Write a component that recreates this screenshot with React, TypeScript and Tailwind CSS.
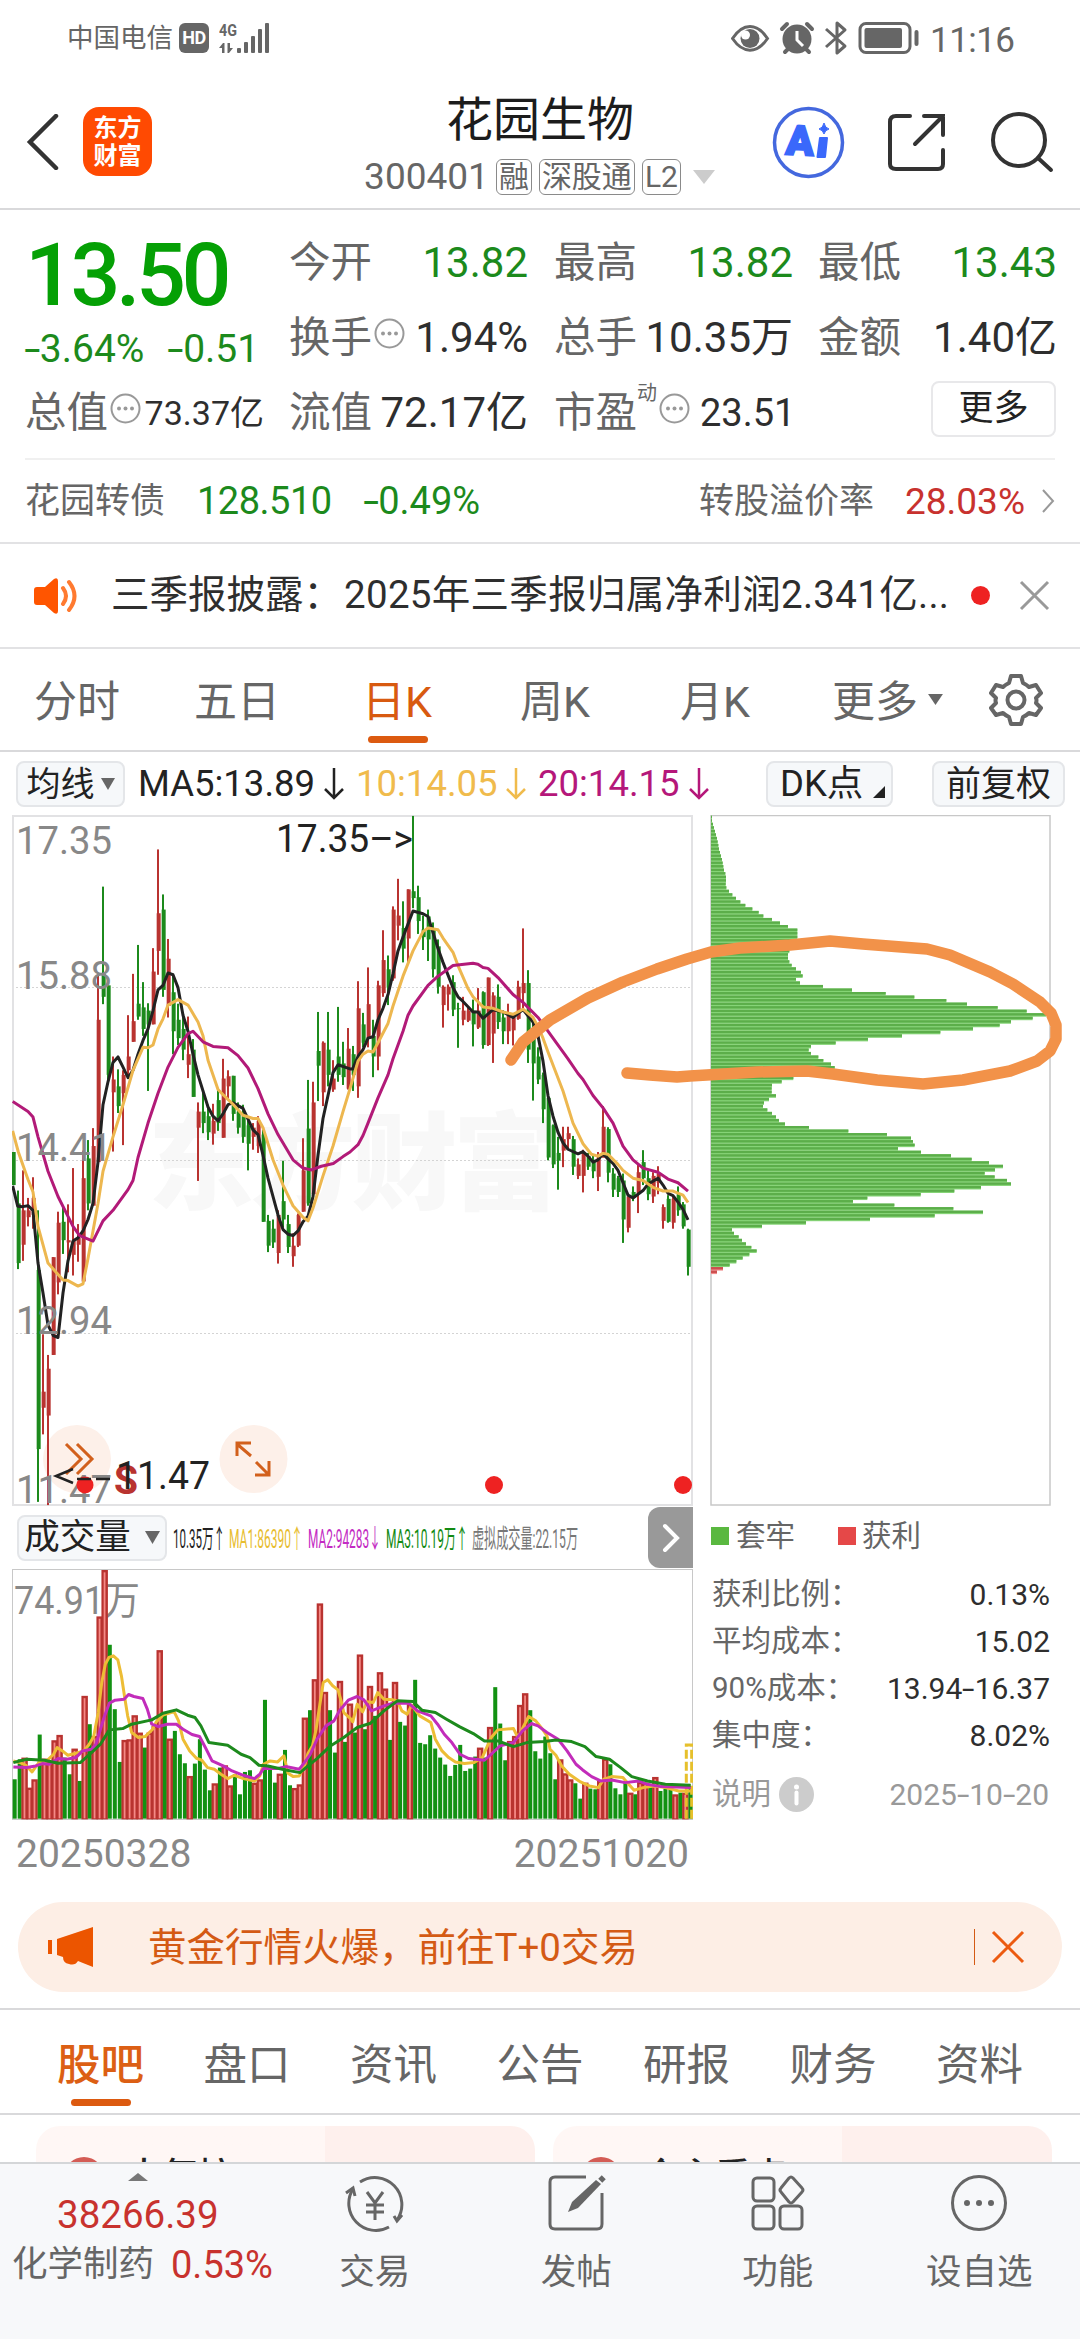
import React from "react";
import { clsx } from "clsx";

type Candle = [
  color: "r" | "g",
  high: number,
  bodyTop: number,
  bodyBottom: number,
  low: number
];

type Bar = ["r" | "g", number];

const RED = "#b93330";
const GREEN = "#1c8a1c";

// One candle every 15 plot units, y grows downwards
const candles: Candle[] = [
  ["g", 768, 768, 840, 840], ["g", 852, 880, 1010, 1023], ["r", 808, 895, 970, 1005],
  ["r", 868, 895, 910, 930], ["r", 823, 868, 905, 935], ["g", 895, 1025, 1415, 1530],
  ["r", 1165, 1290, 1325, 1383], ["r", 1210, 1240, 1342, 1537], ["r", 997, 997, 1210, 1210],
  ["r", 898, 922, 1052, 1078], ["g", 885, 920, 960, 990], ["r", 882, 960, 965, 1030],
  ["r", 803, 962, 992, 1037], ["r", 925, 955, 970, 1007], ["r", 765, 825, 1050, 1055],
  ["g", 742, 782, 880, 895], ["r", 716, 755, 885, 885], ["r", 380, 480, 790, 790],
  ["g", 190, 380, 430, 446], ["g", 405, 405, 600, 615], ["r", 560, 610, 638, 767],
  ["g", 588, 625, 668, 683], ["r", 590, 600, 640, 753], ["r", 470, 560, 590, 605],
  ["r", 380, 483, 528, 528], ["g", 317, 445, 473, 480], ["g", 398, 453, 500, 515],
  ["g", 444, 460, 490, 635], ["r", 324, 375, 490, 490], ["r", 109, 248, 330, 382],
  ["g", 207, 240, 415, 430], ["r", 304, 347, 450, 475], ["g", 380, 420, 505, 555],
  ["g", 445, 480, 520, 535], ["g", 470, 500, 545, 568], ["r", 473, 555, 578, 607],
  ["g", 522, 545, 648, 648], ["r", 660, 680, 715, 831], ["g", 635, 680, 705, 727],
  ["g", 665, 690, 725, 742], ["r", 663, 700, 728, 752], ["g", 630, 655, 705, 722],
  ["r", 565, 608, 737, 737], ["r", 590, 603, 625, 655], ["g", 602, 602, 685, 700],
  ["g", 660, 680, 715, 728], ["g", 665, 690, 735, 748], ["g", 700, 710, 750, 808],
  ["r", 705, 715, 735, 763], ["r", 690, 700, 755, 770], ["g", 720, 730, 920, 920],
  ["g", 905, 918, 972, 986], ["g", 915, 935, 965, 977], ["r", 895, 905, 988, 1011],
  ["g", 787, 875, 915, 932], ["g", 905, 925, 975, 988], ["r", 945, 972, 995, 1018],
  ["r", 902, 905, 972, 975], ["r", 738, 808, 898, 898], ["g", 611, 717, 880, 885],
  ["r", 615, 660, 860, 870], ["g", 463, 548, 580, 657], ["r", 527, 530, 638, 668],
  ["g", 463, 545, 600, 625], ["r", 568, 608, 632, 637], ["g", 452, 560, 600, 615],
  ["g", 528, 575, 605, 622], ["r", 498, 543, 630, 632], ["g", 537, 555, 600, 635],
  ["r", 396, 455, 625, 650], ["g", 465, 490, 530, 540], ["r", 366, 446, 520, 540],
  ["g", 480, 515, 560, 605], ["r", 395, 405, 560, 590], ["r", 285, 350, 422, 430],
  ["g", 340, 370, 410, 448], ["r", 233, 240, 390, 395], ["r", 173, 253, 275, 307],
  ["g", 222, 280, 325, 355], ["r", 196, 196, 303, 360], ["g", 36, 200, 215, 237],
  ["g", 188, 213, 265, 293], ["g", 253, 283, 300, 328], ["g", 240, 255, 305, 352],
  ["g", 268, 283, 370, 388], ["g", 305, 320, 408, 423], ["r", 405, 408, 448, 497],
  ["r", 403, 408, 425, 460], ["g", 383, 398, 458, 472], ["g", 443, 455, 457, 541],
  ["r", 430, 460, 480, 492], ["r", 450, 460, 482, 485], ["g", 436, 460, 490, 538],
  ["r", 411, 460, 497, 500], ["g", 418, 420, 535, 543], ["r", 388, 388, 535, 537],
  ["r", 420, 427, 510, 574], ["g", 403, 430, 485, 500], ["g", 460, 475, 505, 533],
  ["r", 445, 470, 505, 533], ["r", 470, 475, 503, 536], ["r", 395, 408, 478, 480],
  ["r", 281, 400, 422, 455], ["g", 372, 400, 545, 574], ["g", 480, 505, 575, 656],
  ["g", 540, 560, 610, 620], ["g", 595, 600, 675, 705], ["g", 645, 650, 780, 786],
  ["g", 708, 710, 795, 803], ["g", 735, 770, 787, 850], ["r", 713, 740, 765, 801],
  ["r", 713, 727, 740, 760], ["g", 733, 740, 800, 818], ["r", 782, 795, 820, 827],
  ["r", 763, 770, 820, 856], ["g", 770, 777, 800, 807], ["g", 775, 785, 810, 825],
  ["r", 768, 780, 822, 853], ["r", 668, 713, 780, 780], ["g", 714, 718, 813, 834],
  ["g", 803, 815, 850, 866], ["g", 820, 825, 855, 866], ["g", 815, 830, 915, 966],
  ["r", 865, 865, 933, 943], ["g", 843, 855, 868, 875], ["r", 793, 812, 858, 901],
  ["g", 764, 790, 825, 840], ["g", 808, 825, 860, 873], ["r", 812, 820, 865, 879],
  ["r", 799, 815, 835, 860], ["r", 882, 888, 918, 935], ["g", 862, 870, 920, 922],
  ["r", 862, 870, 922, 935], ["g", 843, 860, 895, 907], ["g", 877, 882, 930, 935],
  ["g", 935, 937, 1018, 1037],
];

const ma5 =
  "38,842 53,886 68,887 84,885 99,895 114,1010 129,1075 144,1145 160,1168 174,1172 189,1075 204,1005 219,962 234,955 249,940 264,915 279,880 294,790 309,665 324,615 339,573 354,561 369,583 384,606 399,590 414,555 429,525 444,500 459,460 474,415 489,405 504,378 519,382 534,410 549,470 564,505 579,555 594,600 624,670 639,690 654,700 669,685 684,665 699,661 729,673 759,720 774,730 789,775 804,825 834,905 849,937 864,947 879,950 894,940 909,920 924,908 939,865 954,775 969,695 999,595 1014,578 1050,587 1058,587 1074,560 1089,545 1104,520 1119,517 1134,480 1149,455 1164,425 1179,380 1194,330 1209,300 1239,243 1269,249 1284,255 1299,290 1314,325 1329,355 1359,410 1374,430 1389,440 1419,463 1434,463 1449,477 1479,458 1509,463 1539,475 1569,458 1599,485 1614,515 1629,570 1644,645 1659,690 1674,725 1689,748 1704,762 1734,772 1749,767 1764,777 1779,790 1794,785 1809,772 1824,783 1839,793 1854,808 1869,835 1884,862 1899,868 1929,852 1944,838 1974,825 1989,840 2004,858 2019,863 2034,877 2049,893 2064,916";
const ma10 =
  "38,722 55,768 84,828 99,855 114,930 144,1010 189,1047 204,1048 234,1060 249,1055 264,1000 294,880 309,810 339,735 369,665 399,590 429,540 444,541 459,535 474,500 489,478 504,448 534,436 564,448 594,485 609,515 624,568 654,632 669,643 699,664 729,688 759,695 774,695 789,715 819,785 849,840 879,885 909,910 924,918 939,890 969,820 999,755 1029,680 1050,630 1074,570 1089,555 1104,548 1119,550 1134,530 1164,488 1179,450 1209,385 1239,330 1269,288 1284,280 1314,284 1329,302 1359,333 1374,362 1404,412 1419,430 1449,452 1479,455 1509,463 1539,468 1554,463 1569,457 1599,475 1614,495 1629,520 1644,550 1689,635 1719,705 1749,750 1774,773 1794,777 1809,771 1824,773 1854,795 1869,808 1899,825 1929,830 1959,845 1989,853 2019,853 2049,862 2064,878";
const ma20 =
  "38,658 84,680 99,692 114,735 144,810 174,865 219,930 239,950 279,962 309,918 339,895 384,850 399,830 414,780 444,705 474,640 504,583 534,540 564,510 579,505 609,528 639,538 684,541 714,558 744,585 774,630 804,685 834,730 879,785 909,803 934,807 964,799 1000,793 1029,778 1050,768 1074,752 1089,732 1104,705 1134,650 1164,600 1179,565 1209,505 1224,470 1239,450 1284,405 1314,385 1359,362 1419,357 1434,359 1449,366 1464,368 1494,388 1539,425 1569,442 1614,475 1659,520 1704,565 1734,597 1749,610 1779,645 1809,672 1839,705 1869,755 1899,785 1929,803 1974,812 2004,827 2034,835 2064,853";

const volumes: Bar[] = [
  ["g", 840], ["g", 780], ["r", 775], ["r", 865], ["r", 840], ["g", 706], ["r", 778], ["r", 785],
  ["r", 723], ["r", 707], ["g", 775], ["g", 825], ["r", 748], ["g", 845], ["r", 590], ["g", 675],
  ["r", 710], ["r", 352], ["r", 213], ["g", 437], ["g", 630], ["g", 788], ["r", 722], ["r", 720],
  ["r", 648], ["r", 700], ["g", 745], ["r", 700], ["r", 680], ["r", 453], ["g", 645], ["r", 718],
  ["g", 695], ["g", 765], ["g", 792], ["r", 830], ["g", 793], ["g", 720], ["g", 811], ["g", 873],
  ["r", 852], ["g", 805], ["r", 798], ["r", 858], ["g", 825], ["g", 885], ["g", 818], ["g", 813],
  ["r", 850], ["r", 840], ["g", 602], ["g", 800], ["g", 850], ["r", 823], ["g", 752], ["g", 858],
  ["r", 866], ["r", 855], ["r", 655], ["g", 633], ["r", 540], ["r", 313], ["r", 578], ["g", 633],
  ["g", 760], ["r", 545], ["g", 728], ["r", 613], ["g", 700], ["r", 466], ["g", 690], ["r", 560],
  ["g", 650], ["r", 519], ["r", 568], ["g", 722], ["r", 548], ["g", 668], ["g", 679], ["r", 615],
  ["g", 542], ["g", 731], ["g", 735], ["g", 708], ["g", 748], ["g", 775], ["g", 796], ["g", 830],
  ["g", 797], ["g", 737], ["g", 815], ["g", 808], ["g", 772], ["r", 745], ["g", 775], ["r", 683],
  ["g", 564], ["g", 673], ["g", 783], ["r", 725], ["r", 710], ["r", 617], ["r", 582], ["g", 633],
  ["g", 756], ["g", 778], ["g", 712], ["g", 762], ["g", 840], ["r", 780], ["r", 822], ["r", 840],
  ["g", 852], ["g", 898], ["r", 850], ["g", 868], ["g", 870], ["r", 845], ["r", 778], ["g", 795],
  ["g", 867], ["g", 885], ["g", 845], ["r", 880], ["g", 885], ["r", 848], ["r", 850], ["g", 862],
  ["r", 833], ["g", 875], ["g", 868], ["g", 865], ["r", 885], ["g", 880], ["r", 880], ["g", 860],
];

const volMa1 =
  "30,785 45,790 58,798 72,818 87,790 105,785 120,765 128,745 140,755 152,768 170,762 188,755 200,735 210,712 220,640 228,550 236,495 244,475 254,470 264,482 272,530 280,600 286,650 295,700 310,715 325,712 342,690 350,668 365,648 390,637 400,665 410,720 425,755 440,777 452,783 465,805 480,810 495,825 510,838 525,828 545,838 570,845 582,830 590,795 605,785 622,788 636,770 645,822 657,832 670,830 682,800 690,762 700,740 708,690 716,620 724,550 734,542 745,560 757,572 765,610 770,640 785,658 790,668 800,615 812,638 822,608 836,610 846,580 860,600 880,602 890,605 900,635 912,645 922,618 940,650 965,670 975,720 990,755 1005,775 1020,788 1040,793 1062,790 1080,775 1090,745 1100,715 1115,692 1150,688 1160,715 1173,680 1184,652 1200,665 1215,690 1225,710 1232,750 1245,768 1258,800 1275,825 1300,848 1320,860 1340,865 1352,840 1370,832 1395,835 1410,858 1420,873 1440,865 1465,860 1490,865 1520,875 1547,875";
const volMa2 =
  "30,803 60,805 80,800 95,793 110,795 130,778 150,780 170,775 185,755 205,750 215,735 225,690 233,655 245,612 258,603 278,600 288,586 300,592 320,598 330,630 340,675 355,682 375,675 395,675 410,690 430,706 447,712 460,745 475,785 500,800 520,815 545,828 570,838 582,825 590,808 620,808 640,802 670,810 682,790 695,765 710,720 730,680 748,665 760,635 780,603 800,592 815,602 832,635 860,620 880,612 915,612 935,635 965,650 980,675 995,705 1012,730 1030,765 1050,778 1085,783 1100,765 1120,740 1150,730 1170,695 1190,673 1205,680 1225,700 1250,720 1270,755 1290,795 1305,812 1325,832 1345,845 1370,842 1400,850 1430,845 1450,855 1480,862 1547,865";
const volMa3 =
  "30,790 60,780 100,783 130,792 180,790 205,760 225,735 245,692 275,688 295,675 340,662 365,642 395,632 420,648 437,655 450,680 468,730 510,738 540,765 560,775 580,798 600,800 640,812 672,820 690,800 710,778 740,740 770,715 800,685 830,672 860,635 890,605 925,607 945,633 975,640 1000,660 1030,683 1060,703 1085,725 1115,725 1150,742 1180,730 1220,727 1245,722 1280,727 1310,742 1335,772 1365,780 1390,805 1415,832 1450,845 1490,855 1547,858";

// Cost distribution, one entry per price step from the top
const chips = [
  3, 3, 6, 9, 12, 15, 18, 20, 22, 24, 27, 30, 33, 35, 37, 39, 43, 45, 45, 44, 46, 54, 64, 75, 88,
  103, 124, 143, 157, 183, 207, 231, 259, 259, 259, 255, 250, 245, 235, 231, 231, 235, 242, 255, 270,
  275, 255, 267, 336, 423, 524, 610, 706, 768, 860, 947, 1006, 965, 900, 866, 786, 688, 573, 471, 374,
  300, 293, 300, 322, 337, 360, 371, 350, 300, 247, 212, 183, 182, 182, 195, 174, 159, 156, 169, 183,
  195, 204, 222, 294, 412, 528, 600, 606, 611, 561, 630, 720, 782, 834, 876, 852, 821, 851, 888, 900,
  810, 730, 629, 469, 426, 550, 727, 816, 671, 477, 285, 153, 63, 69, 83, 93, 105, 121, 137, 115, 95,
  76, 56, 36, 18,
];

const StatusBar: React.FC = (): React.ReactNode => (
  <div className="flex h-[76px] items-center justify-between pl-[67px] pr-[61px] text-[#666]">
    <div className="flex items-center">
      <span className="text-[26.500px] leading-none">中国电信</span>
      <span className="ml-[6px] flex h-[30px] w-[30px] items-center justify-center rounded-md bg-[#666] text-[18px] leading-none font-bold tracking-tight text-white">
        HD
      </span>
      <svg className="ml-2.5" width="54" height="34" viewBox="0 0 54 34" fill="#666">
        <text x="0" y="15" fontSize="16" fontWeight="700" textLength="18" lengthAdjust="spacingAndGlyphs">
          4G
        </text>
        <path d="M4 22l-4 5h3v5h2.500V22zM10 32l4-5h-3v-5H8.500v10z" />
        <rect x="18" y="27" width="4" height="5" rx="1" />
        <rect x="25" y="21" width="4" height="11" rx="1" />
        <rect x="32" y="15" width="4" height="17" rx="1" />
        <rect x="39" y="8" width="4" height="24" rx="1" />
        <rect x="46" y="2" width="4" height="30" rx="1" />
      </svg>
    </div>
    <svg width="288" height="40" viewBox="731 17 288 40" fill="none" stroke="#666">
      <path d="M732.500 37.500C743 21.500 757 21.500 767.500 37.500C757 53 743 53 732.500 37.500Z" strokeWidth="3" />
      <circle cx="750" cy="37.500" r="9.500" fill="#666" stroke="none" />
      <circle cx="745.500" cy="34" r="4.500" fill="#fff" stroke="none" />
      <circle cx="797" cy="38" r="14.500" fill="#666" stroke="none" />
      <path d="M797 30v9l6 6" stroke="#fff" strokeWidth="3" />
      <path d="M782 28l5-5M812 28l-5-5M785 51l3-3M809 51l-3-3" strokeWidth="4" strokeLinecap="round" />
      <path d="M826 28l19 17-8 7V22l8 7-19 17" strokeWidth="3" strokeLinejoin="round" />
      <rect x="860" y="22.500" width="50" height="29" rx="6" strokeWidth="3" />
      <rect x="864.500" y="27" width="37.500" height="20" rx="2" fill="#666" stroke="none" />
      <rect x="914.500" y="29" width="4" height="16" rx="2" fill="#666" stroke="none" />
      <text x="930" y="51" fontSize="35" fill="#666" stroke="none" textLength="85">
        11:16
      </text>
    </svg>
  </div>
);

const Badge: React.FC<{ children: string }> = ({ children }): React.ReactNode => (
  <span className="flex h-9 items-center rounded-md border-[1.500px] border-[#8a8a8a] px-[2px] text-[30px] leading-none">
    {children}
  </span>
);

const Header: React.FC = (): React.ReactNode => (
  <div className="flex h-[134px] border-b-2 border-[#d9d9db]">
    <div className="flex w-[310px] items-center gap-6 pb-[1px] pl-[25px]">
      <svg width="34" height="56" viewBox="0 0 34 56" fill="none" stroke="#333" strokeWidth="4.500">
        <path d="M31 2L5 28l26 26" strokeLinecap="round" />
      </svg>
      <div className="flex h-[69px] w-[69px] flex-col items-center justify-center rounded-2xl bg-[#ff4a02] text-[24px] leading-[28px] font-bold text-white">
        <span>东方</span>
        <span>财富</span>
      </div>
    </div>
    <div className="flex flex-1 flex-col items-center pt-[20px]">
      <h1 className="text-[47px] leading-[48px] font-normal text-[#1c1c1c]">花园生物</h1>
      <div className="mt-[14px] flex items-center gap-[7px] text-[#666]">
        <span className="text-[37px] leading-none">300401</span>
        <Badge>融</Badge>
        <Badge>深股通</Badge>
        <Badge>L2</Badge>
        <svg className="ml-1" width="24" height="16" viewBox="0 0 24 16" fill="#ccc">
          <path d="M1 1h22L12 15z" />
        </svg>
      </div>
    </div>
    <svg width="310" height="132" viewBox="770 76 310 132" fill="none" stroke="#333" strokeWidth="4">
      <circle cx="808.500" cy="142.500" r="34" stroke="#4468de" strokeWidth="3.500" />
      <g fill="#3a68fb" stroke="#3a68fb" strokeWidth="2">
        <text x="786" y="155" fontSize="41" fontWeight="900" textLength="28" lengthAdjust="spacingAndGlyphs" transform="rotate(3 800 140)">
          A
        </text>
        <path d="M820 138h7l-2 19h-7.500z" strokeLinejoin="round" />
        <path d="M824 123q1 5 5 6q-4 1-5 5q-1-4-5-5q4-1 5-6z" strokeWidth="1" />
      </g>
      <g strokeLinecap="round">
        <path d="M910 116h-14q-6 0-6 6v42q0 5 6 5h42q5 0 5-5v-14M924 116h19v19M943 116l-28 28" />
        <circle cx="1019" cy="140" r="26" />
        <path d="M1038 158l13 12" />
      </g>
    </svg>
  </div>
);

// Roboto's hyphen is short, so it is stretched inside figures
const Figure: React.FC<{ children: string; className?: string }> = ({
  children,
  className,
}): React.ReactNode => (
  <span className={className}>
    {children.split("-").map((part, index) => (
      <React.Fragment key={index}>
        {index > 0 && <span className="mx-[2px] inline-block scale-x-150">-</span>}
        {part}
      </React.Fragment>
    ))}
  </span>
);

const MoreDot: React.FC = (): React.ReactNode => (
  <svg width="31" height="31" viewBox="0 0 31 31" fill="#999" className="mb-2 ml-[2px] shrink-0">
    <circle cx="15.500" cy="15.500" r="14" fill="none" stroke="#999" strokeWidth="2" />
    <circle cx="9" cy="15.500" r="2" />
    <circle cx="15.500" cy="15.500" r="2" />
    <circle cx="22" cy="15.500" r="2" />
  </svg>
);

type StatProps = {
  label: string;
  value: string;
  dot?: boolean;
  green?: boolean;
  small?: boolean;
};

const Stat: React.FC<StatProps> = ({ label, value, dot, green, small }): React.ReactNode => (
  <div className={clsx("flex items-center justify-between whitespace-nowrap", "w-[239px]")}>
    <span className="flex items-center text-[41.500px] leading-none text-[#666]">
      {label}
      {dot && <MoreDot />}
    </span>
    <span
      className={clsx(
        "leading-none",
        small ? "text-[34px]" : "text-[42px]",
        green ? "text-[#1c8a1c]" : "text-[#2e2e2e]"
      )}
    >
      {value}
    </span>
  </div>
);

const Quote: React.FC = (): React.ReactNode => (
  <div className="px-[25px] pt-[15px]">
    <div className="grid h-[235px] grid-cols-[264px_265px_264px_238px] grid-rows-[75px_75px_75px] border-b-2 border-[#f0f0f0]">
      <div className="row-span-2 flex flex-col whitespace-nowrap text-[#05a005]">
        <span className="mt-[6px] text-[88px] leading-[88px] font-medium tracking-[-4.500px]">13.50</span>
        <span className="mt-[11px] flex gap-6 text-[39px] leading-none text-[#1c8a1c]">
          <Figure>-3.64%</Figure>
          <Figure>-0.51</Figure>
        </span>
      </div>
      <Stat label="今开" value="13.82" green />
      <Stat label="最高" value="13.82" green />
      <Stat label="最低" value="13.43" green />
      <Stat label="换手" value="1.94%" dot />
      <Stat label="总手" value="10.35万" />
      <Stat label="金额" value="1.40亿" />
      <Stat label="总值" value="73.37亿" dot small />
      <Stat label="流值" value="72.17亿" />
      <div className="flex items-center whitespace-nowrap">
        <span className="text-[41.500px] leading-none text-[#666]">市盈</span>
        <span className="mb-10 text-[20px] leading-none text-[#666]">动</span>
        <MoreDot />
        <span className="ml-2.5 text-[38px] leading-none text-[#2e2e2e]">23.51</span>
      </div>
      <div className="flex items-center justify-end pb-[8px]">
        <span className="flex h-14 w-[125px] items-center justify-center rounded-lg border-2 border-[#e8e8ea] text-[35px] leading-none text-[#222]">
          更多
        </span>
      </div>
    </div>
    <div className="flex h-[82px] items-center text-[35px] leading-none text-[#666]">
      <span>花园转债</span>
      <span className="ml-8 text-[38px] tracking-[-0.500px] text-[#1c8a1c]">128.510</span>
      <Figure className="ml-8 text-[38px] text-[#1c8a1c]">-0.49%</Figure>
      <span className="ml-auto">转股溢价率</span>
      <span className="ml-[31px] text-[37px] text-[#c8322e]">28.03%</span>
      <svg className="ml-4" width="14" height="24" viewBox="0 0 14 24" fill="none" stroke="#999" strokeWidth="2">
        <path d="M2 1l10 11L2 23" />
      </svg>
    </div>
  </div>
);

const Notice: React.FC = (): React.ReactNode => (
  <div className="flex h-[107px] items-center border-y-2 border-[#e2e2e4] pr-[30px] pl-[33px] text-[38.500px] leading-none whitespace-nowrap text-[#2e2e2e]">
    <svg width="46" height="40" viewBox="0 0 46 40" fill="#ff5500">
      <path d="M4 11h8L21 3q4-2 4 2v30q0 4-4 2l-9-8H4q-3 0-3-3V14q0-3 3-3z" />
      <path d="M30 12q6 8 0 16M36 6q11 14 0 28" fill="none" stroke="#ff7a30" strokeWidth="4" strokeLinecap="round" />
    </svg>
    <span className="ml-[32px]">三季报披露：</span>
    <span className="ml-[2px] tracking-[0.300px]">2025年三季报归属净利润2.341亿...</span>
    <span className="ml-auto h-[19px] w-[19px] rounded-full bg-[#ee2222]" />
    <svg className="ml-[29px]" width="31" height="31" viewBox="0 0 31 31" stroke="#999" strokeWidth="3">
      <path d="M2 2l27 27M29 2L2 29" />
    </svg>
  </div>
);

const periods = [
  { label: "分时", className: "ml-[34px] w-[160px]" },
  { label: "五日", className: "w-[168px]" },
  { label: "日K", className: "w-[158px]", active: true },
  { label: "周K", className: "w-[160px]" },
  { label: "月K", className: "w-[152px]" },
];

const PeriodTabs: React.FC = (): React.ReactNode => (
  <div className="flex h-[103px] items-center border-b-2 border-[#d9d9db] text-[43px] leading-none text-[#666]">
    {periods.map((period) => (
      <div key={period.label} className={clsx("relative pt-1.5", period.className, period.active && "text-[#d85a10]")}>
        {period.label}
        {period.active && <span className="absolute top-[61px] left-[6px] h-[7px] w-[60px] rounded-full bg-[#dc5a10]" />}
      </div>
    ))}
    <span className="pt-1.5">更多</span>
    <svg className="ml-2.5" width="15" height="13" viewBox="0 0 16 14" fill="#666">
      <path d="M0 1h16L8 13z" />
    </svg>
    <svg className="ml-[46px]" width="54" height="54" viewBox="-27 -27 54 54" fill="none" stroke="#666" strokeWidth="4">
      <path
        d="M-5 -24H5L7 -17Q11 -15 13 -13L20 -15L25 -7L20 -2Q21 0 20 3L25 8L20 15L13 13Q11 15 7 17L5 24H-5L-7 17Q-11 15 -13 13L-20 15L-25 8L-20 3Q-21 0 -20 -2L-25 -7L-20 -15L-13 -13Q-11 -15 -7 -17Z"
        strokeLinejoin="round"
      />
      <circle r="8.500" />
    </svg>
  </div>
);

const DownArrow: React.FC<{ color: string }> = ({ color }): React.ReactNode => (
  <svg width="20" height="32" viewBox="0 0 20 32" fill="none" stroke={color} strokeWidth="2.500">
    <path d="M10 0v30M1 21l9 9 9-9" />
  </svg>
);

const ChartToolbar: React.FC = (): React.ReactNode => (
  <div className="flex h-[63px] items-center pt-[1px] pl-4 text-[36.500px] leading-none whitespace-nowrap text-[#222]">
    <div className="flex h-[46px] w-[109px] items-center justify-center gap-1.5 rounded-lg border-2 border-[#e4e6e9] bg-[#f6f8fa] text-[34px]">
      均线
      <svg width="14" height="12" viewBox="0 0 14 12" fill="#666">
        <path d="M0 0h14L7 12z" />
      </svg>
    </div>
    <div className="ml-[13px] flex w-[206px] items-center justify-between">
      MA5:13.89 <DownArrow color="#222" />
    </div>
    <div className="ml-[12px] flex w-[170px] items-center justify-between text-[#f0bb4c]">
      10:14.05 <DownArrow color="#f0bb4c" />
    </div>
    <div className="ml-[12px] flex w-[171px] items-center justify-between text-[#b5177a]">
      20:14.15 <DownArrow color="#b5177a" />
    </div>
    <div className="ml-[57px] flex h-[46px] w-[127px] items-center rounded-lg border-2 border-[#e4e6e9] bg-[#f6f8fa] pl-3">
      DK点
      <svg className="mt-4 ml-2.5" width="12" height="12" viewBox="0 0 12 12" fill="#222">
        <path d="M12 0v12H0z" />
      </svg>
    </div>
    <div className="ml-[39px] flex h-[46px] w-[133px] items-center justify-center rounded-lg border-2 border-[#e4e6e9] bg-[#f6f8fa] text-[35px]">
      前复权
    </div>
  </div>
);

const axis = [
  { label: "17.35", y: 39 },
  { label: "15.88", y: 174 },
  { label: "14.41", y: 346 },
  { label: "12.94", y: 519 },
  { label: "11.47", y: 688 },
];

const PriceChart: React.FC = (): React.ReactNode => (
  <svg width="681" height="691" viewBox="0 0 681 691" className="block">
    <text x="136" y="386" fontSize="106" fontWeight="900" fill="#f8f8f8" textLength="411">
      东方财富
    </text>
    <g stroke="#d4d4d4" strokeDasharray="2 2">
      <path d="M0 172.500H680M0 345.500H680M0 518.500H680" />
    </g>
    <rect x="1" y="1" width="679" height="689" fill="none" stroke="#e2e2e4" strokeWidth="2" />
    <circle cx="65" cy="644" r="34" fill="#fdf0e9" />
    <circle cx="241.500" cy="644" r="34" fill="#fdf0e9" />
    <svg x="0" y="0" width="681" height="691" viewBox="36 34 2043 1505" preserveAspectRatio="none">
      {candles.map(([color, high, top, bottom, low], i) => {
        const x = 39 + i * 15;
        const fill = color === "r" ? RED : GREEN;
        return (
          <g key={i} fill={fill}>
            <rect x={x - 3} y={high} width="6" height={low - high} />
            <rect x={x - 4} y={top} width="12" height={bottom - top} />
          </g>
        );
      })}
      <g fill="none" strokeLinejoin="round">
        <polyline points={ma5} stroke="#222" strokeWidth="3" vectorEffect="non-scaling-stroke" />
        <polyline points={ma10} stroke="#edb74f" strokeWidth="3" vectorEffect="non-scaling-stroke" />
        <polyline points={ma20} stroke="#b21a78" strokeWidth="3" vectorEffect="non-scaling-stroke" />
      </g>
    </svg>
    <g fontSize="38" fill="#888">
      {axis.map((tick) => (
        <text key={tick.label} x="4" y={tick.y} textLength="96" lengthAdjust="spacingAndGlyphs">
          {tick.label}
        </text>
      ))}
    </g>
    <g stroke="#d2601c" strokeWidth="3" fill="none">
      <path d="M54 629l15 15-15 15M65 629l15 15-15 15" />
      <path d="M239 641l-14-12M225 641v-13h14M244 647l13 13M243 660h14v-14" />
    </g>
    <circle cx="73" cy="670" r="8.500" fill="#ee2222" />
    <circle cx="482" cy="670" r="9" fill="#ee2222" />
    <circle cx="671" cy="670" r="9" fill="#ee2222" />
    <text x="102" y="679" fontSize="40" fontWeight="700" fill={RED} textLength="24" lengthAdjust="spacingAndGlyphs">
      S
    </text>
    <g fontSize="38" fill="#222">
      <text x="264" y="37" textLength="137" lengthAdjust="spacingAndGlyphs">
        17.35–&gt;
      </text>
      <text x="104" y="674" textLength="94" lengthAdjust="spacingAndGlyphs">
        11.47
      </text>
      <path d="M61 654l-17 7 17 7M65 664h14M84 664h14" fill="none" stroke="#222" strokeWidth="2.500" />
    </g>
  </svg>
);

const ChipChart: React.FC = (): React.ReactNode => (
  <svg width="341" height="691" viewBox="0 0 341 691" className="block">
    <rect x="1" y="0.500" width="339" height="689.500" fill="none" stroke="#c8c8c8" strokeWidth="1.500" />
    <svg x="0" y="0" width="341" height="691" viewBox="60 35 1023 1505" preserveAspectRatio="none">
      {chips.map((size, i) => {
        const profit = i > 127;
        const y = 36.5 + i * 7.68;
        return (
          <g key={i}>
            <rect x="63" y={y} width={size} height="7.700" fill={profit ? "#f08c8c" : "#86d477"} />
            <rect x="63" y={y} width={size} height="5.200" fill={profit ? "#cc4f4f" : "#5cae4a"} />
          </g>
        );
      })}
    </svg>
  </svg>
);

const VolumeHeader: React.FC = (): React.ReactNode => (
  <div className="flex h-[63px] items-center pl-[5px]">
    <div className="flex h-[46px] w-[150px] items-center justify-center gap-3.5 rounded-lg border-2 border-[#e4e6e9] bg-[#f6f8fa] text-[35.500px] leading-none text-[#222]">
      成交量
      <svg width="15" height="13" viewBox="0 0 15 13" fill="#666">
        <path d="M0 0h15L7.500 13z" />
      </svg>
    </div>
    <svg className="ml-1.5" width="410" height="34" viewBox="173 1522 410 34" fontSize="26">
      <text x="173" y="1549" fill="#222" textLength="52" lengthAdjust="spacingAndGlyphs">10.35万↑</text>
      <text x="229" y="1549" fill="#e8bd30" textLength="74" lengthAdjust="spacingAndGlyphs">MA1:86390↑</text>
      <text x="308" y="1549" fill="#c32bc3" textLength="73" lengthAdjust="spacingAndGlyphs">MA2:94283↓</text>
      <text x="386" y="1549" fill="#128a12" textLength="82" lengthAdjust="spacingAndGlyphs">MA3:10.19万↑</text>
      <text x="472" y="1549" fill="#777" textLength="106" lengthAdjust="spacingAndGlyphs">虚拟成交量:22.15万</text>
    </svg>
    <div className="ml-auto flex h-[61px] w-[45px] items-center justify-center rounded-l-xl bg-[#999]">
      <svg width="18" height="30" viewBox="0 0 18 30" fill="none" stroke="#fff" strokeWidth="4" strokeLinecap="round">
        <path d="M3 3l12 12L3 27" />
      </svg>
    </div>
  </div>
);

const VolumeChart: React.FC = (): React.ReactNode => (
  <svg width="681" height="251" viewBox="0 0 681 251" className="block">
    <rect x="0.500" y="0.500" width="680" height="250" fill="none" stroke="#c8c8c8" />
    <text x="2" y="45" fontSize="39" fill="#888" textLength="126" lengthAdjust="spacingAndGlyphs">
      74.91万
    </text>
    <svg x="0" y="0" width="681" height="251" viewBox="27 210 1525 752" preserveAspectRatio="none">
      {volumes.map(([color, top], i) => {
        const x = 33 + i * 11.21;
        return color === "r" ? (
          <g key={i}>
            <rect x={x - 7.5} y={top} width="14.500" height={960 - top} fill={RED} />
            <rect x={x - 2.5} y={top + 7} width="4" height={950 - top} fill="#f58a86" />
          </g>
        ) : (
          <rect key={i} x={x - 4.5} y={top} width="9" height={958 - top} fill="#129112" />
        );
      })}
      <path d="M1537 958V737H1549V958" fill="none" stroke="#e6c02c" strokeWidth="3" strokeDasharray="9 3" vectorEffect="non-scaling-stroke" />
      <g fill="none" strokeWidth="3" strokeLinejoin="round">
        <polyline points={volMa1} stroke="#edbd35" vectorEffect="non-scaling-stroke" />
        <polyline points={volMa2} stroke="#c22cba" vectorEffect="non-scaling-stroke" />
        <polyline points={volMa3} stroke="#1d8a1d" vectorEffect="non-scaling-stroke" />
      </g>
    </svg>
  </svg>
);

const costs = [
  { label: "获利比例：", value: "0.13%" },
  { label: "平均成本：", value: "15.02" },
  { label: "90%成本：", value: "13.94-16.37" },
  { label: "集中度：", value: "8.02%" },
];

const CostPanel: React.FC = (): React.ReactNode => (
  <div className="flex w-[341px] flex-col text-[29.500px] leading-none whitespace-nowrap text-[#666]">
    <div className="mt-[15px] mb-[20px] flex h-[30px] items-center">
      <span className="ml-[1px] h-[18px] w-[18px] bg-[#5ab840]" />
      <span className="ml-[7px] w-[102px] pt-[2px]">套牢</span>
      <span className="h-[18px] w-[18px] bg-[#e54848]" />
      <span className="ml-[6px] pt-[2px]">获利</span>
    </div>
    {costs.map((cost) => (
      <div key={cost.label} className="flex h-[47px] items-center justify-between pr-[1px] pl-[2px]">
        <span>{cost.label}</span>
        <Figure className="text-[30px] text-[#2e2e2e]">{cost.value}</Figure>
      </div>
    ))}
    <div className="mt-[18px] flex items-center pr-[2px] pl-[2px] text-[#999]">
      <span>说明</span>
      <svg className="ml-2" width="35" height="35" viewBox="0 0 35 35">
        <circle cx="17.500" cy="17.500" r="17.500" fill="#ccc" />
        <circle cx="17.500" cy="10" r="2.500" fill="#fff" />
        <path d="M17.500 15.500v11" stroke="#fff" strokeWidth="4" strokeLinecap="round" />
      </svg>
      <Figure className="ml-auto text-[30px]">2025-10-20</Figure>
    </div>
  </div>
);

const Promo: React.FC = (): React.ReactNode => (
  <div className="mx-[18px] mt-[14px] flex h-[90px] items-center rounded-full bg-[#fdeee5] pr-[37px] pl-[30px] text-[38.500px] leading-none text-[#d45a14]">
    <svg width="46" height="40" viewBox="0 0 46 40" fill="#ec5500">
      <rect x="0" y="13" width="4" height="14" />
      <path d="M9 12L45 0v40L30 34q-3 5-9 3-6-1-6-7l-6-2z" />
    </svg>
    <span className="ml-[54px] pt-[2px]">黄金行情火爆，前往T+0交易</span>
    <span className="ml-auto h-9 w-px bg-[#d45a14]" />
    <svg className="ml-[16px]" width="34" height="34" viewBox="0 0 34 34" stroke="#ec5a10" strokeWidth="3">
      <path d="M2 2l30 30M32 2L2 32" />
    </svg>
  </div>
);

const sections = ["股吧", "盘口", "资讯", "公告", "研报", "财务", "资料"];

const SectionTabs: React.FC = (): React.ReactNode => (
  <div className="mt-4 flex h-[107px] items-center justify-between border-y-2 border-[#d9d9db] px-[57px] text-[43.500px] leading-none text-[#666]">
    {sections.map((section, index) => (
      <div key={section} className={clsx("relative pt-2", index === 0 && "font-medium text-[#dc5f14]")}>
        {section}
        {index === 0 && <span className="absolute top-[63px] left-[14px] h-[7px] w-[60px] rounded-full bg-[#dc5a10]" />}
      </div>
    ))}
  </div>
);

const TopicCards: React.FC = (): React.ReactNode => (
  <div className="flex h-[47px] gap-[18px] overflow-hidden pt-[11px] pl-[36px]">
    {["大每控", "今主看点"].map((title) => (
      <div
        key={title}
        className="flex h-[120px] w-[499px] shrink-0 rounded-3xl bg-linear-to-r from-[#fff7f5] from-58% to-[#fef0ed] to-58% pt-[31px] pl-[28px]"
      >
        <span className="h-10 w-10 rounded-full bg-[#d45c55]" />
        <span className="ml-[22px] text-[36px] leading-[40px] font-medium text-[#222]">{title}</span>
      </div>
    ))}
  </div>
);

const actions = [
  {
    label: "交易",
    icon: (
      <>
        <path d="M15 9a27 27 0 0 1 37 38M44 54A27 27 0 0 1 8 16" />
        <path d="M1 20l7-5 2 8M57 42l-5 6-3-5" />
        <path d="M22 19l8 11 8-11M30 30v17M21 32h18M21 39h18" />
      </>
    ),
  },
  {
    label: "发帖",
    icon: (
      <>
        <path d="M40 4H9q-5 0-5 5v42q0 5 5 5h42q5 0 5-5V20" />
        <path d="M22 39l4-10L50 7l5 4-23 24z" fill="#666" stroke="none" />
        <path d="M54 4l4 4" strokeWidth="5" />
      </>
    ),
  },
  {
    label: "功能",
    icon: (
      <>
        <rect x="5" y="5" width="21" height="23" rx="4" />
        <rect x="5" y="33" width="21" height="23" rx="4" />
        <rect x="32" y="33" width="22" height="23" rx="4" />
        <path d="M41 5q2-2 4 0l9 10q2 2 0 4l-9 10q-2 2-4 0l-8-10q-2-2 0-4z" />
      </>
    ),
  },
  {
    label: "设自选",
    icon: (
      <>
        <circle cx="30" cy="30" r="26.500" />
        <g fill="#666" stroke="none">
          <circle cx="18" cy="30" r="3" />
          <circle cx="30" cy="30" r="3" />
          <circle cx="42" cy="30" r="3" />
        </g>
      </>
    ),
  },
];

const BottomBar: React.FC = (): React.ReactNode => (
  <div className="flex h-[177px] border-t-2 border-[#d4d6d8] bg-[#f7f8fa] text-[35.500px] leading-none whitespace-nowrap text-[#666]">
    <div className="flex w-[274px] flex-col pt-[9px] pl-[12px]">
      <svg className="ml-[116px]" width="20" height="8" viewBox="0 0 20 8" fill="#777">
        <path d="M0 8L10 0l10 8z" />
      </svg>
      <span className="mt-[15px] ml-[45px] text-[38.500px] text-[#c8322e]">38266.39</span>
      <span className="mt-[11px] flex items-center gap-[17px]">
        化学制药 <span className="text-[38px] text-[#c8322e]">0.53%</span>
      </span>
    </div>
    {actions.map((action) => (
      <div key={action.label} className="flex w-[201.500px] flex-col items-center pt-[9px]">
        <svg width="60" height="60" viewBox="0 0 60 60" fill="none" stroke="#666" strokeWidth="3">
          {action.icon}
        </svg>
        <span className="mt-[22px]">{action.label}</span>
      </div>
    ))}
  </div>
);

// Freehand loop drawn by the user over both charts
const Annotation: React.FC = (): React.ReactNode => (
  <svg
    className="pointer-events-none absolute top-[920px] left-[500px]"
    width="580"
    height="180"
    viewBox="500 920 580 180"
    fill="none"
    stroke="#f29249"
    strokeWidth="11.500"
    strokeLinecap="round"
    strokeLinejoin="round"
  >
    <path d="M511 1060L523 1042L550 1020L588 998L623 982L657 969L687 959L711 952L740 948L790 945L830 941L863 944L927 949L950 955L990 972L1013 984L1040 1002L1051 1013L1056 1025L1056 1039L1050 1051L1037 1061L1010 1071L963 1080L923 1084L877 1080L833 1074L807 1071L757 1072L690 1076L677 1077L650 1075L627 1073" />
  </svg>
);

const App: React.FC = (): React.ReactNode => (
  <div className="relative h-[2340px] w-[1080px] overflow-hidden bg-white font-[Roboto,'Noto_Sans_CJK_SC',sans-serif]">
    <StatusBar />
    <Header />
    <Quote />
    <Notice />
    <PeriodTabs />
    <ChartToolbar />
    <div className="flex h-[1073px] gap-[17px] pl-3">
      <div className="w-[681px]">
        <PriceChart />
        <VolumeHeader />
        <VolumeChart />
        <div className="flex justify-between px-1 pt-[15px] text-[39px] leading-none text-[#888]">
          <span>20250328</span>
          <span>20251020</span>
        </div>
      </div>
      <div>
        <ChipChart />
        <CostPanel />
      </div>
    </div>
    <Promo />
    <SectionTabs />
    <TopicCards />
    <BottomBar />
    <Annotation />
  </div>
);

export default App;
